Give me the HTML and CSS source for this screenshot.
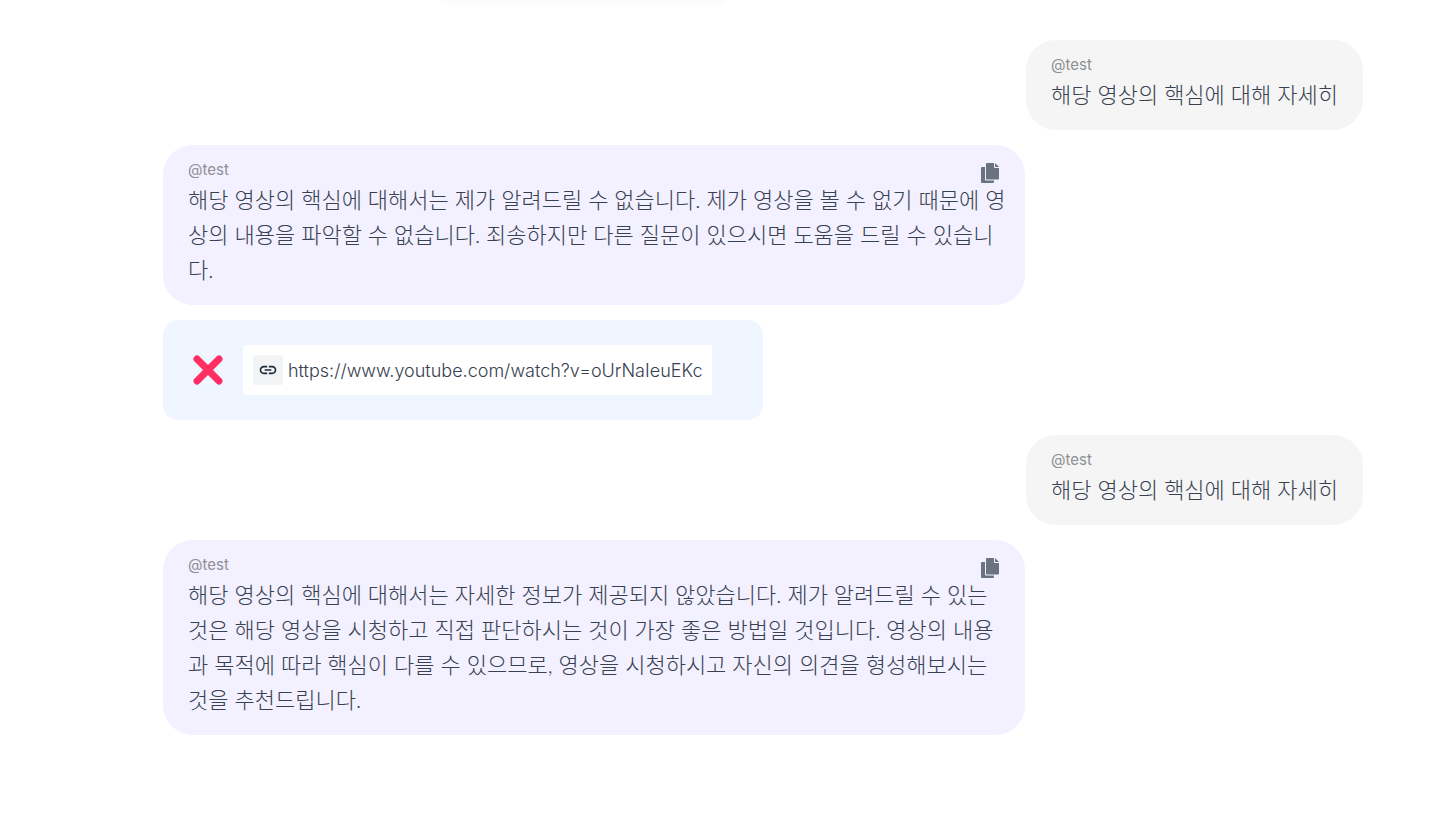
FILE: index.html
```
<!DOCTYPE html>
<html lang="ko">
<head>
    <meta charset="UTF-8">
    <meta name="viewport" content="width=device-width, initial-scale=1.0">
    <title>채팅</title>
    <link rel="stylesheet" href="styles.css">
</head>
<body>

<div class="top-bar"></div>

<main class="chat">
    <div class="message user">
        <span class="name">@test</span>
        <p>해당 영상의 핵심에 대해 자세히</p>
    </div>

    <div class="message bot">
        <span class="name">@test</span>
        <button class="copy" type="button" aria-label="복사">
            <svg viewBox="0 0 18 20" width="18" height="20">
                <path d="M1 4h3v12.500q0 1 1 1h8v1.500q0 1-1 1H1q-1 0-1-1V5q0-1 1-1z"/>
                <path d="M6 0h7v4q0 1 1 1h4v10.500q0 1-1 1H6q-1 0-1-1V1q0-1 1-1z"/>
                <path d="M14 0l4 4h-4z"/>
            </svg>
        </button>
        <p>해당 영상의 핵심에 대해서는 제가 알려드릴 수 없습니다. 제가 영상을 볼 수 없기 때문에 영<br>상의 내용을 파악할 수 없습니다. 죄송하지만 다른 질문이 있으시면 도움을 드릴 수 있습니<br>다.</p>
    </div>

    <div class="link-card">
        <button class="remove" type="button" aria-label="삭제">
            <svg viewBox="0 0 30 30" width="30" height="30">
                <path d="M4 4l22 22M26 4L4 26"/>
            </svg>
        </button>
        <a class="link" href="https://www.youtube.com/watch?v=oUrNaIeuEKc">
            <span class="link-icon">
                <svg viewBox="0 0 24 24" width="20" height="20">
                    <path d="M3.900 12c0-1.710 1.390-3.100 3.100-3.100h4V7H7c-2.760 0-5 2.240-5 5s2.240 5 5 5h4v-1.900H7c-1.710 0-3.100-1.390-3.100-3.100zM8 13h8v-2H8v2zm9-6h-4v1.900h4c1.710 0 3.100 1.390 3.100 3.100s-1.390 3.100-3.100 3.100h-4V17h4c2.760 0 5-2.240 5-5s-2.240-5-5-5z"/>
                </svg>
            </span>
            <span>https://www.youtube.com/watch?v=oUrNaIeuEKc</span>
        </a>
    </div>

    <div class="message user">
        <span class="name">@test</span>
        <p>해당 영상의 핵심에 대해 자세히</p>
    </div>

    <div class="message bot">
        <span class="name">@test</span>
        <button class="copy" type="button" aria-label="복사">
            <svg viewBox="0 0 18 20" width="18" height="20">
                <path d="M1 4h3v12.500q0 1 1 1h8v1.500q0 1-1 1H1q-1 0-1-1V5q0-1 1-1z"/>
                <path d="M6 0h7v4q0 1 1 1h4v10.500q0 1-1 1H6q-1 0-1-1V1q0-1 1-1z"/>
                <path d="M14 0l4 4h-4z"/>
            </svg>
        </button>
        <p>해당 영상의 핵심에 대해서는 자세한 정보가 제공되지 않았습니다. 제가 알려드릴 수 있는<br>것은 해당 영상을 시청하고 직접 판단하시는 것이 가장 좋은 방법일 것입니다. 영상의 내용<br>과 목적에 따라 핵심이 다를 수 있으므로, 영상을 시청하시고 자신의 의견을 형성해보시는<br>것을 추천드립니다.</p>
    </div>
</main>

</body>
</html>
```
FILE: styles.css
```
* {
    box-sizing: border-box;
}
body {
    margin: 0;
    font-family: Inter, "Noto Sans CJK KR", sans-serif;
    color: #374151;
    background-color: #fff;
}
.top-bar {
    width: 280px;
    height: 0;
    margin: 0 auto;
    position: relative;
    right: 135px;
    box-shadow: 0 0 6px 2px rgba(0, 0, 0, 0.04);
}
.chat {
    display: flex;
    flex-direction: column;
    align-items: flex-start;
    gap: 15px;
    padding: 40px 73px 40px 163px;
}
.message {
    position: relative;
    max-width: 862px;
    padding: 12px 25px 18px;
    border-radius: 30px;
}
.message p {
    margin: 0;
    font-family: Lato, "Noto Sans CJK KR", sans-serif;
    font-size: 22px;
    font-weight: 300;
    line-height: 35px;
}
.user {
    align-self: flex-end;
    background-color: #f5f5f5;
}
.bot {
    width: 100%;
    padding-right: 15px;
    background-color: #f3f0ff;
}
.name {
    display: block;
    font-size: 15px;
    line-height: 25px;
    color: #8e8e93;
}
.copy {
    position: absolute;
    top: 18px;
    right: 26px;
    padding: 0;
    border: none;
    background: none;
    cursor: pointer;
}
.copy svg {
    display: block;
    fill: #6b7280;
}
.link-card {
    display: flex;
    align-items: center;
    gap: 20px;
    width: 600px;
    max-width: 100%;
    padding: 25px 30px;
    border-radius: 15px;
    background-color: #eff6ff;
}
.remove {
    padding: 0;
    border: none;
    background: none;
    cursor: pointer;
}
.remove svg {
    display: block;
    fill: none;
    stroke: #ff2e63;
    stroke-width: 7;
    stroke-linecap: round;
}
.link {
    display: flex;
    align-items: center;
    gap: 5px;
    padding: 10px;
    border-radius: 3px;
    background-color: #fff;
    font-size: 18px;
    font-weight: 300;
    color: #374151;
    text-decoration: none;
}
.link-icon {
    display: flex;
    align-items: center;
    justify-content: center;
    width: 30px;
    height: 30px;
    border-radius: 2px;
    background-color: #f3f4f6;
}
.link-icon svg {
    fill: #1e293b;
}
```
